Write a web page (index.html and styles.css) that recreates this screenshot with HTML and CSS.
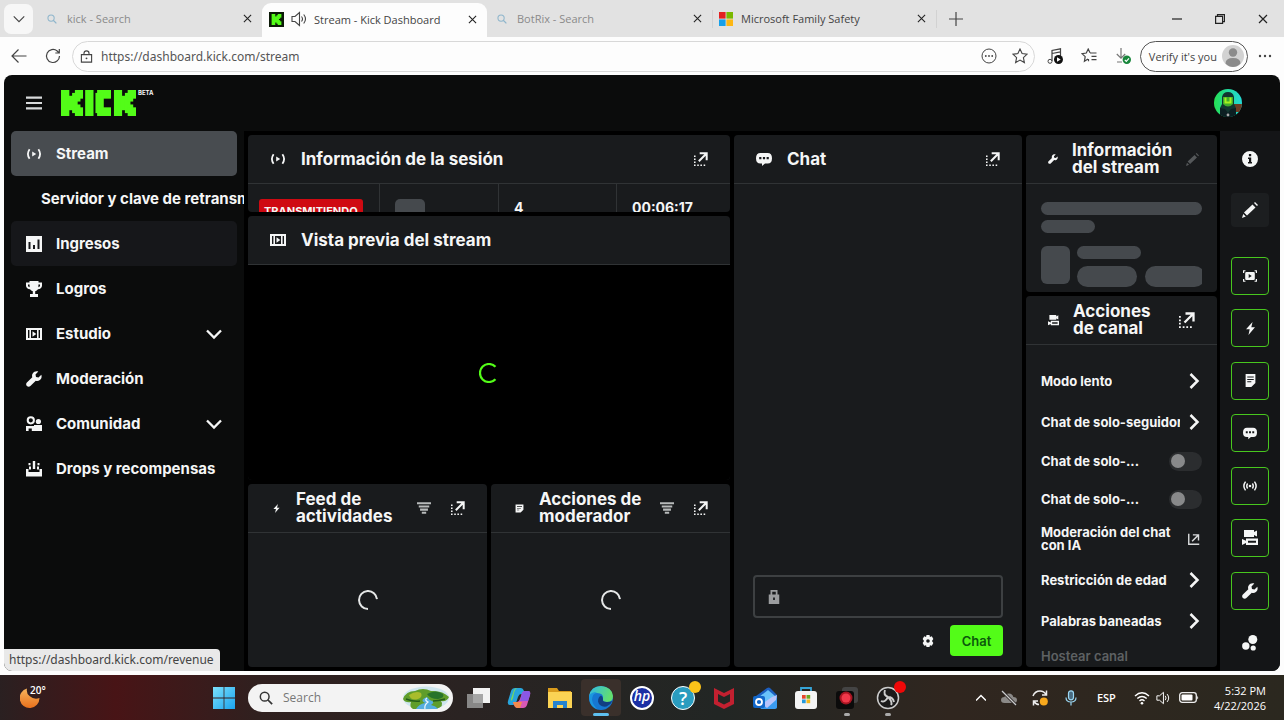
FILE: index.html
```html
<!DOCTYPE html>
<html lang="es">
<head>
<meta charset="utf-8">
<title>Stream - Kick Dashboard</title>
<link rel="stylesheet" href="styles.css">
</head>
<body>
<svg class="defs" aria-hidden="true">
  <symbol id="close" viewBox="0 0 10 10"><path d="M1 1l8 8M9 1L1 9" fill="none" stroke="currentColor" stroke-width="1.2"/></symbol>
  <symbol id="magnify" viewBox="0 0 16 16"><circle cx="6.5" cy="6.5" r="5" fill="none" stroke="currentColor" stroke-width="1.7"/><path d="M10 10l5 5" stroke="currentColor" stroke-width="2"/></symbol>
  <symbol id="k" viewBox="0 0 8 9"><rect width="3" height="9"/><rect x="2.500" y="2" width="2" height="5"/><rect x="4" y="1" width="2" height="7"/><rect x="5" width="3" height="3"/><rect x="5" y="2.500" width="2" height="1.500"/><rect x="5" y="5" width="2" height="1.500"/><rect x="5" y="6" width="3" height="3"/></symbol>
  <symbol id="live" viewBox="0 0 16 16"><path d="M3.6 3.2Q.2 8 3.6 12.8M12.4 3.2Q15.800 8 12.4 12.8" fill="none" stroke="currentColor" stroke-width="1.8"/><path d="M6.200 5.500v5l4-2.500z"/></symbol>
  <symbol id="bars" viewBox="0 0 16 16"><path fill-rule="evenodd" d="M0 0h16v16H0zM2.500 6v7h2V6zM7 9v4h2V9zM11.500 3.500V13h2V3.500z"/></symbol>
  <symbol id="trophy" viewBox="0 0 16 16"><path fill-rule="evenodd" d="M3.500 0h9v1.500H16V5q-.5 3-4 3.300Q11 9.800 9.200 10.200V13H12v3H4v-3h2.800v-2.800Q5 9.800 4 8.300.5 8 0 5V1.500h3.500zM2 3.500V5q.4 1 1.600 1.200V3.500zM14 3.500h-1.600v2.700Q13.600 6 14 5z"/></symbol>
  <symbol id="film" viewBox="0 0 16 16"><path fill-rule="evenodd" d="M0 2h16v12H0zM2 4v8h1.400V4zM5 4v8h6V4zM12.600 4v8H14V4z"/><path d="M6.500 5.200v5.600L10.300 8z"/></symbol>
  <symbol id="wrench" viewBox="0 0 16 16"><path d="M15.300 3.800l-2.800 2.700-2.500-.5-.5-2.500L12.300.6C10.200-.1 7.900.6 6.700 2.400c-.8 1.200-.8 2.600-.4 3.800L.9 11.500c-1 1-1 2.500 0 3.500s2.500 1 3.500 0l5.400-5.300c1.400.5 2.900.2 4.100-.7 1.600-1.300 2.100-3.300 1.400-5.200z"/></symbol>
  <symbol id="people" viewBox="0 0 16 16"><circle cx="4.800" cy="4.300" r="3.100" fill="none" stroke="currentColor" stroke-width="2"/><circle cx="12.400" cy="5.500" r="2.600"/><path d="M0 15v-5h8.500v5h-2.700v-2.500H2.600V15zM8 9h8v6H8z"/></symbol>
  <symbol id="drops" viewBox="0 0 16 16"><path d="M6.800 0h2.400v8H6.800zM2.500 2h2v2.200h-2zM11.500 2h2v2.200h-2zM3 5.500h2v3H3zM11 5.500h2v3h-2zM0 8h2.500v3h11V8H16v7.500H0z"/></symbol>
  <symbol id="down" viewBox="0 0 16 16"><path d="M1 4.500l7 7 7-7" fill="none" stroke="currentColor" stroke-width="2.300"/></symbol>
  <symbol id="chevron" viewBox="0 0 16 16"><path d="M1 4.500l7 7 7-7" fill="none" stroke="currentColor" stroke-width="1.500"/></symbol>
  <symbol id="right" viewBox="0 0 16 16"><path d="M4.500 1l7 7-7 7" fill="none" stroke="currentColor" stroke-width="2.500"/></symbol>
  <symbol id="popout" viewBox="0 0 16 16"><path d="M6.500 1.500h8v8M14 2l-8.500 8.500" fill="none" stroke="currentColor" stroke-width="2.300"/><path d="M0 4h1.800v1.800H0zM0 7.400h1.800v1.800H0zM0 10.800h1.800v1.800H0zM0 14.200h1.800V16H0zM3.700 14.200h1.800V16H3.700zM7.300 14.200h1.800V16H7.300zM11 14.200h1.800V16H11z"/></symbol>
  <symbol id="filter" viewBox="0 0 16 16"><path d="M0 1.500h16v2.300H0zM2 5h12v2.300H2zM3.500 8.700h9V11h-9zM5.500 12.200h5v2.300h-5z"/></symbol>
  <symbol id="bubble" viewBox="0 0 16 16"><path fill-rule="evenodd" d="M4.500 2h7Q16 2 16 7.300T11.500 12.500H9L6 15v-2.500H4.500Q0 12.500 0 7.300T4.500 2zM3.200 6v2.300h2.200V6zM6.900 6v2.300h2.200V6zM10.600 6v2.300h2.200V6z"/></symbol>
  <symbol id="bolt" viewBox="0 0 16 16"><path d="M10.500 0L2.500 9H7l-1.500 7L13.500 6.500H9z"/></symbol>
  <symbol id="note" viewBox="0 0 16 16"><path fill-rule="evenodd" d="M1 1h14v9l-5 5H1zM3.500 4v1.200h9V4zM3.500 7v1.200h7V7zM3.500 10v1.200h4V10z"/></symbol>
  <symbol id="page" viewBox="0 0 16 16"><path fill-rule="evenodd" d="M2 0h12v11l-5 5H2zM4 3v1.300h8V3zM4 6v1.300h8V6zM4 9v1.300h5V9z"/></symbol>
  <symbol id="pencil" viewBox="0 0 16 16"><path d="M10.500 2.500l3 3-8.500 8-3-3zM12 1l1-1 3 3-1 1zM1.200 12l2.600 2.600L0 16z"/></symbol>
  <symbol id="info" viewBox="0 0 16 16"><path fill-rule="evenodd" d="M8 0a8 8 0 100 16A8 8 0 008 0zM6.900 3v2.200h2.300V3zM6 6.500V8h1v3H6v1.600h4V11H9.200V6.500z"/></symbol>
  <symbol id="clip" viewBox="0 0 16 16"><path fill-rule="evenodd" d="M4 3.500h8q1.500 0 1.500 1.500v6q0 1.500-1.500 1.500H4q-1.500 0-1.500-1.500V5q0-1.500 1.500-1.500zM6.500 5.800v4.400L10 8z"/><path d="M.7 4.500V2h2.100M13.200 2h2.100v2.500M.7 11.500V14h2.100M13.200 14h2.100v-2.500" fill="none" stroke="currentColor" stroke-width="1.400"/></symbol>
  <symbol id="signal" viewBox="0 0 16 16"><path d="M2.900 3Q-.9 8 2.900 13M13.100 3Q16.900 8 13.100 13M5.300 5.200Q3.300 8 5.300 10.800M10.700 5.200Q12.700 8 10.700 10.800" fill="none" stroke="currentColor" stroke-width="1.700"/><circle cx="8" cy="8" r="1.500"/></symbol>
  <symbol id="cams" viewBox="0 0 16 16"><path fill-rule="evenodd" d="M2 0h10v2l3-1.500v6L12 5v2H2zM4 8.500h12V15H4v-2l-4 2V9l4 1.800zM6 10.700v2h8v-2z"/></symbol>
  <symbol id="dots3" viewBox="0 0 16 16"><circle cx="10.800" cy="4.500" r="4.500"/><circle cx="3.800" cy="11" r="3.700"/><circle cx="11.200" cy="13" r="2.600"/></symbol>
  <symbol id="lock" viewBox="0 0 16 16"><path fill-rule="evenodd" d="M4 0h8v5h2v11H2V5h2zM6 2v3h4V2zM7 8.500v3h2v-3z"/></symbol>
  <symbol id="gear" viewBox="0 0 16 16"><path fill-rule="evenodd" d="M6 0h4l.6 2.500 2.500-.8 2 3.500L13.300 8l1.800 2.800-2 3.500-2.500-.8L10 16H6l-.6-2.500-2.500.8-2-3.500L2.700 8 .9 5.200l2-3.500 2.500.8zM8 5.600a2.400 2.400 0 100 4.800 2.400 2.400 0 000-4.800z"/></symbol>
  <symbol id="external" viewBox="0 0 16 16"><path d="M1 1v14h14" fill="none" stroke="currentColor" stroke-width="1.900"/><path d="M6.500 2.500h7.500V10M14 2.500L5.500 11" fill="none" stroke="currentColor" stroke-width="1.900"/></symbol>
  <symbol id="ring" viewBox="0 0 20 20"><path d="M19 9.200A9 9 0 1010 19" fill="none" stroke="currentColor" stroke-width="2"/></symbol>
  <symbol id="ring-c" viewBox="0 0 20 20"><path d="M16.500 3.800A9 9 0 1016.500 16.200" fill="none" stroke="currentColor" stroke-width="2.200"/></symbol>
  <symbol id="speaker" viewBox="0 0 16 16"><path d="M1 5.500h3L8.500 1.500v13L4 10.500H1zM10.500 5.500q2 2.500 0 5M12.700 3.500q3.600 4.500 0 9" fill="none" stroke="currentColor" stroke-width="1.100"/></symbol>
  <symbol id="star" viewBox="0 0 16 16"><path d="M8 1l2.100 4.600 5 .6-3.700 3.400 1 5L8 12.100l-4.400 2.500 1-5L.9 6.200l5-.6z" fill="none" stroke="currentColor" stroke-width="1.100"/></symbol>
</svg>

<header class="tabstrip">
  <button class="tab-menu" aria-label="Tab actions"><svg class="i12"><use href="#chevron"/></svg></button>
  <div class="tab faded"><svg class="i10 blue"><use href="#magnify"/></svg><span class="tab-title">kick - Search</span><button class="tab-close" aria-label="Close"><svg class="i9"><use href="#close"/></svg></button></div>
  <div class="tab active"><span class="favicon"><svg class="fav-k"><use href="#k"/></svg></span><svg class="i16"><use href="#speaker"/></svg><span class="tab-title">Stream - Kick Dashboard</span><button class="tab-close" aria-label="Close"><svg class="i9"><use href="#close"/></svg></button></div>
  <div class="tab faded"><svg class="i10 blue"><use href="#magnify"/></svg><span class="tab-title">BotRix - Search</span><button class="tab-close" aria-label="Close"><svg class="i9"><use href="#close"/></svg></button></div>
  <div class="tab family"><svg class="i14" viewBox="0 0 14 14"><path fill="#e32020" d="M0 0h6.600v6.600H0z"/><path fill="#7ab800" d="M7.400 0H14v6.600H7.400z"/><path fill="#16a0ea" d="M0 7.400h6.600V14H0z"/><path fill="#fdb713" d="M7.400 7.400H14V14H7.400z"/></svg><span class="tab-title">Microsoft Family Safety</span><button class="tab-close" aria-label="Close"><svg class="i9"><use href="#close"/></svg></button></div>
  <button class="new-tab" aria-label="New tab"><svg class="i14" viewBox="0 0 14 14"><path d="M7 0v14M0 7h14" stroke="#444" stroke-width="1.200"/></svg></button>
  <div class="window-buttons">
    <button aria-label="Minimize"><svg class="i10" viewBox="0 0 10 10"><path d="M0 5h10" stroke="#222" stroke-width="1.200"/></svg></button>
    <button aria-label="Restore"><svg class="i10" viewBox="0 0 10 10"><path d="M.6 2.400h7v7h-7zM2.500 2V.6h7v7H8" fill="none" stroke="#222" stroke-width="1.200"/></svg></button>
    <button aria-label="Close window"><svg class="i10"><use href="#close"/></svg></button>
  </div>
</header>

<div class="toolbar">
  <button aria-label="Back"><svg class="i16" viewBox="0 0 16 16"><path d="M15.500 8H1M7.500 1.500L1 8l6.500 6.500" fill="none" stroke="currentColor" stroke-width="1.200"/></svg></button>
  <button aria-label="Refresh"><svg class="i16" viewBox="0 0 16 16"><path d="M14.500 8A6.500 6.500 0 1112.200 3l1.800 1.800M14.300 1v4h-4" fill="none" stroke="currentColor" stroke-width="1.200"/></svg></button>
  <div class="address">
    <svg class="i13" viewBox="0 0 13 14"><path d="M1 5h11v8H1zM3.800 5V3.500Q3.800 1 6.500 1t2.700 2.500V5" fill="none" stroke="currentColor" stroke-width="1.200"/><circle cx="6.500" cy="9" r="1"/></svg>
    <input type="text" aria-label="Address" value="https://dashboard.kick.com/stream">
    <button aria-label="More"><svg class="i16" viewBox="0 0 16 16"><circle cx="8" cy="8" r="7" fill="none" stroke="currentColor"/><circle cx="4.800" cy="8" r=".9"/><circle cx="8" cy="8" r=".9"/><circle cx="11.200" cy="8" r=".9"/></svg></button>
    <button aria-label="Favorite"><svg class="i16"><use href="#star"/></svg></button>
  </div>
  <div class="tools">
    <button aria-label="Media"><svg class="i16" viewBox="0 0 16 16"><path d="M5 13V2.500L13.500.8V8M5 5.500l8.500-1.700" fill="none" stroke="currentColor" stroke-width="1.200"/><circle cx="3" cy="13.300" r="2" fill="none" stroke="currentColor"/><circle cx="11.500" cy="11.500" r="4.500" fill="#111"/><path d="M10 9.200v4.600l3.700-2.300z" fill="#fff"/></svg></button>
    <button aria-label="Favorites"><svg class="i16" viewBox="0 0 16 16"><path d="M9 4.800L7.200 1 5.300 5 1 5.600l3.200 3-.8 4.600L7 11M7.500 11v2.300M9 5h6.500M10.500 8.300h5M10.500 11.600h5" fill="none" stroke="currentColor" stroke-width="1.200"/></svg></button>
    <button aria-label="Downloads"><svg class="i16" viewBox="0 0 16 16"><path d="M6 0v10M1.800 6L6 10.200 10.200 6M2 14h5" fill="none" stroke="#777" stroke-width="1.200"/><circle cx="11.800" cy="11.800" r="4.200" fill="#17863b"/><path d="M9.800 11.800l1.500 1.500 2.700-2.900" fill="none" stroke="#fff" stroke-width="1.200"/></svg></button>
  </div>
  <button class="verify">Verify it's you<svg class="i22" viewBox="0 0 22 22"><circle cx="11" cy="11" r="11" fill="#d2d2d2"/><circle cx="11" cy="7.500" r="4.200" fill="#8b8b8b"/><path d="M3.500 18.500q0-5.500 7.500-5.500t7.500 5.500Q15 22 11 22t-7.500-3.500z" fill="#8b8b8b"/></svg></button>
  <button class="more" aria-label="Settings"><svg class="i14" viewBox="0 0 14 14"><circle cx="2" cy="7" r="1.200"/><circle cx="7" cy="7" r="1.200"/><circle cx="12" cy="7" r="1.200"/></svg></button>
</div>

<div class="page">
  <header class="app-header">
    <button aria-label="Menú"><svg class="i16" viewBox="0 0 16 16"><path d="M0 1.500h16v2.200H0zM0 6.900h16v2.200H0zM0 12.300h16v2.200H0z"/></svg></button>
    <a class="logo" href="#" aria-label="Kick">
      <svg class="wordmark" viewBox="0 0 27 9" preserveAspectRatio="none"><use href="#k" width="8" height="9"/><rect x="8.700" width="3" height="9"/><rect x="13" width="5" height="3"/><rect x="12.400" y="1" width="3" height="7"/><rect x="13" y="6" width="5" height="3"/><use href="#k" x="19" width="8" height="9"/></svg>
      <span class="beta">BETA</span>
    </a>
    <button class="profile" aria-label="Perfil"><svg class="i28" viewBox="0 0 28 28"><defs><clipPath id="round"><circle cx="14" cy="14" r="14"/></clipPath><linearGradient id="av" x1="0" x2="1"><stop offset="0" stop-color="#26e052"/><stop offset=".5" stop-color="#20dca0"/><stop offset="1" stop-color="#25d9d6"/></linearGradient></defs><g clip-path="url(#round)"><path fill="url(#av)" d="M0 0h28v28H0z"/><path fill="#6b3b22" d="M20 15h8v8h-8z"/><path fill="#12352f" d="M6 28V19l2-4V8q1-5 6-5t6 5v7l2 4v9z"/><path fill="#0c1f22" d="M6 19l5 1 3 4 3-4 5-1v9H6z"/><path fill="#3fae2a" d="M9 8h10v7q-5 5-10 0z"/><path fill="#a6f021" d="M10.500 8.500h2v4h3v-4h2v6h-7z"/><circle cx="14" cy="26" r="1.400" fill="#aaa"/></g></svg></button>
  </header>

  <div class="app-body">
    <nav class="sidebar" aria-label="Panel">
      <a class="nav-item current" href="#"><svg class="i16"><use href="#live"/></svg><span>Stream</span></a>
      <a class="nav-item sub" href="#"><span>Servidor y clave de retransmisión</span></a>
      <a class="nav-item hover" href="#"><svg class="i16"><use href="#bars"/></svg><span>Ingresos</span></a>
      <a class="nav-item" href="#"><svg class="i16"><use href="#trophy"/></svg><span>Logros</span></a>
      <a class="nav-item" href="#"><svg class="i16"><use href="#film"/></svg><span>Estudio</span><svg class="i16 caret"><use href="#down"/></svg></a>
      <a class="nav-item" href="#"><svg class="i16"><use href="#wrench"/></svg><span>Moderación</span></a>
      <a class="nav-item" href="#"><svg class="i16"><use href="#people"/></svg><span>Comunidad</span><svg class="i16 caret"><use href="#down"/></svg></a>
      <a class="nav-item" href="#"><svg class="i16"><use href="#drops"/></svg><span>Drops y recompensas</span></a>
    </nav>

    <main class="board">
      <div class="column col-main">
        <section class="panel">
          <div class="panel-head"><svg class="i16"><use href="#live"/></svg><h2>Información de la sesión</h2><button aria-label="Abrir"><svg class="i14"><use href="#popout"/></svg></button></div>
          <div class="stats">
            <div class="status"><span class="badge">TRANSMITIENDO</span></div>
            <div><span class="skeleton viewers"></span></div>
            <div>4</div>
            <div>00:06:17</div>
          </div>
        </section>
        <section class="panel">
          <div class="panel-head"><svg class="i16"><use href="#film"/></svg><h2>Vista previa del stream</h2></div>
          <div class="loading video"><svg class="i20 green"><use href="#ring-c"/></svg></div>
        </section>
        <div class="feeds">
          <section class="panel">
            <div class="panel-head narrow"><svg class="i9"><use href="#bolt"/></svg><h2>Feed de actividades</h2><button class="filter" aria-label="Filtrar"><svg class="i14"><use href="#filter"/></svg></button><button aria-label="Abrir"><svg class="i14"><use href="#popout"/></svg></button></div>
            <div class="loading"><svg class="i20"><use href="#ring"/></svg></div>
          </section>
          <section class="panel">
            <div class="panel-head narrow"><svg class="i9"><use href="#note"/></svg><h2>Acciones de moderador</h2><button class="filter" aria-label="Filtrar"><svg class="i14"><use href="#filter"/></svg></button><button aria-label="Abrir"><svg class="i14"><use href="#popout"/></svg></button></div>
            <div class="loading"><svg class="i20"><use href="#ring"/></svg></div>
          </section>
        </div>
      </div>

      <section class="panel chat">
        <div class="panel-head"><svg class="i16"><use href="#bubble"/></svg><h2>Chat</h2><button aria-label="Abrir"><svg class="i14"><use href="#popout"/></svg></button></div>
        <div class="messages"></div>
        <form class="composer">
          <label class="message-box"><svg class="i14"><use href="#lock"/></svg><input type="text" aria-label="Mensaje"></label>
          <div class="composer-actions"><button type="button" aria-label="Ajustes"><svg class="i12"><use href="#gear"/></svg></button><button type="button" class="send">Chat</button></div>
        </form>
      </section>

      <div class="column col-side">
        <section class="panel">
          <div class="panel-head side"><svg class="i10"><use href="#wrench"/></svg><h2>Información del stream</h2><button class="dim" aria-label="Editar"><svg class="i13"><use href="#pencil"/></svg></button></div>
          <div class="placeholder">
            <span class="skeleton line"></span>
            <span class="skeleton line short"></span>
            <div class="media"><span class="skeleton thumb"></span><div class="media-text"><span class="skeleton line mid"></span><div class="pills"><span class="skeleton pill"></span><span class="skeleton pill"></span></div></div></div>
          </div>
        </section>
        <section class="panel">
          <div class="panel-head side"><svg class="i11"><use href="#cams"/></svg><h2>Acciones de canal</h2><button aria-label="Abrir"><svg class="i16"><use href="#popout"/></svg></button></div>
          <div class="actions">
            <button class="action"><span>Modo lento</span><svg class="i16"><use href="#right"/></svg></button>
            <button class="action"><span>Chat de solo-seguidores</span><svg class="i16"><use href="#right"/></svg></button>
            <label class="action toggle"><span>Chat de solo-...</span><input type="checkbox"></label>
            <label class="action toggle"><span>Chat de solo-...</span><input type="checkbox"></label>
            <a class="action wrap" href="#"><span>Moderación del chat con IA</span><svg class="i12"><use href="#external"/></svg></a>
            <button class="action"><span>Restricción de edad</span><svg class="i16"><use href="#right"/></svg></button>
            <button class="action"><span>Palabras baneadas</span><svg class="i16"><use href="#right"/></svg></button>
            <button class="action last" disabled><span>Hostear canal</span></button>
          </div>
        </section>
      </div>
    </main>

    <aside class="rail">
      <button aria-label="Info"><svg class="i16"><use href="#info"/></svg></button>
      <button class="edit" aria-label="Editar"><svg class="i16"><use href="#pencil"/></svg></button>
      <div class="rail-tools">
        <button class="on" aria-label="Vista previa"><svg class="i14"><use href="#clip"/></svg></button>
        <button class="on" aria-label="Actividades"><svg class="i13"><use href="#bolt"/></svg></button>
        <button class="on" aria-label="Moderador"><svg class="i13"><use href="#page"/></svg></button>
        <button class="on" aria-label="Chat"><svg class="i14"><use href="#bubble"/></svg></button>
        <button class="on" aria-label="Sesión"><svg class="i14"><use href="#signal"/></svg></button>
        <button class="on" aria-label="Canal"><svg class="i16"><use href="#cams"/></svg></button>
        <button class="on" aria-label="Stream"><svg class="i16"><use href="#wrench"/></svg></button>
        <button aria-label="Integraciones"><svg class="i16"><use href="#dots3"/></svg></button>
      </div>
    </aside>
  </div>
  <div class="link-status">https://dashboard.kick.com/revenue</div>
</div>

<footer class="taskbar">
  <button class="weather" aria-label="Tiempo"><svg class="i20" viewBox="0 0 20 20"><defs><linearGradient id="moon" x2="0" y2="1"><stop offset="0" stop-color="#f8b45c"/><stop offset="1" stop-color="#e8701c"/></linearGradient></defs><path d="M7 .5A9.900 9.900 0 1019.500 10Q14 12 9.500 8 6 5 7 .5z" fill="url(#moon)"/></svg><span>20°</span></button>
  <button class="start" aria-label="Inicio"><svg class="i22" viewBox="0 0 22 22"><defs><linearGradient id="win" x2="1" y2="1"><stop offset="0" stop-color="#7be0fb"/><stop offset="1" stop-color="#1ba3ee"/></linearGradient></defs><path fill="url(#win)" d="M0 0h10.600v10.600H0zM11.400 0H22v10.600H11.400zM0 11.400h10.600V22H0zM11.400 11.400H22V22H11.400z"/></svg></button>
  <label class="search"><svg class="i14"><use href="#magnify"/></svg><input type="text" placeholder="Search" aria-label="Search"><svg class="scene" viewBox="0 0 50 24"><ellipse cx="25" cy="12" rx="23" ry="11.500" fill="#cfe6ee"/><path d="M2 13q3-8 12-8 8-4 16 0 11-1 18 6-2 5-8 4 4 5-5 8H12q-4-2-2-7-6 1-8-3z" fill="#5f9d2b"/><path d="M8 9q7-5 12-2 2 4-3 6-7 2-9-4z" fill="#a9bd2c"/><path d="M26 8q9-5 16 0 2 4-5 5-8 0-11-5z" fill="#28742b"/><path d="M15 23q3-5 9-6-6-3 2-6 2 3 5 4t-1 4q5 1 7 4z" fill="#55aee0"/><path d="M24 23q-1-4 3-7-4-2-1-4" fill="none" stroke="#e9f7ff" stroke-width="1.200"/><path d="M5 13q8 3 14 2M32 15q5 0 12-2" stroke="#245d1c" stroke-width="1.500" fill="none"/></svg></label>
  <div class="apps">
    <button aria-label="Task view"><svg class="i24" viewBox="0 0 24 24"><path fill="#f2f2f2" d="M7 2h17v15H7z"/><path fill="#999" fill-opacity=".85" d="M1 8h16v14H1z"/></svg></button>
    <button aria-label="Copilot"><svg class="i24" viewBox="0 0 24 24"><path d="M8 2h6q2 0 3 3l1 3h-4q-2 0-3 3l-2 6q-1 2-3 2H3Q0 19 1 15L4 5q1-3 4-3z" fill="#27a4dc"/><path d="M4 13l3-9q1-2 3-2-2 1-3 5L6 12q-1 3-2 3z" fill="#7ad95a"/><path d="M16 22h-6q-2 0-3-3l-1-3h4q2 0 3-3l2-6q1-2 3-2h3q3 0 2 4l-3 10q-1 3-4 3z" fill="#d858b4"/><path d="M18 5h3q3 0 2 4l-2 6h-8l2-8q1-2 3-2z" fill="#8a58e6"/><path d="M6 16h9l-2 6h-3q-2 0-3-3z" fill="#f48a4c"/></svg></button>
    <button aria-label="Explorer"><svg class="i24" viewBox="0 0 24 24"><path fill="#d99b1c" d="M0 2h9l2 3h12v6H0z"/><path fill="#fbd354" d="M0 6h24v16H0z"/><path fill="#2583cf" d="M5 15h14v7h-4v-3H9v3H5z"/></svg></button>
    <button class="running focused" aria-label="Edge"><svg class="i24" viewBox="0 0 24 24"><defs><linearGradient id="edge" x2="1" y2=".3"><stop offset="0" stop-color="#2fb8e8"/><stop offset="1" stop-color="#63df6e"/></linearGradient></defs><circle cx="12" cy="12" r="12" fill="#1677d2"/><path d="M0 10Q2 0 12 0q11 1 12 10 0 6-6 6-5 0-4-3 1-6-6-6-5 0-8 3z" fill="url(#edge)"/><path d="M14 13q-1 3 4 3 3 0 5.500-1-2 4-6 5.500-7 1-8.500-5Q9 11 12 9.500q2 1 2 3.500z" fill="#123f83"/><path d="M0 10q2-4 8-4-5 2-5 8 1 6 6 9.600Q0 21 0 10z" fill="#1c98df"/></svg></button>
    <button aria-label="HP"><span class="hp">hp</span></button>
    <button aria-label="Ayuda"><span class="help">?</span><span class="dot yellow"></span></button>
    <button aria-label="McAfee"><svg class="i24" viewBox="0 0 24 24"><path d="M2 2l10 5 10-5v16l-10 5-10-5zM6 8v7.500l6 3 6-3V8l-6 3z" fill="#c22030" fill-rule="evenodd"/></svg></button>
    <button aria-label="Outlook"><svg class="i24" viewBox="0 0 24 24"><path d="M3 10L14 2q2-1 3 0l7 7v13H3z" fill="#1c5fc0"/><path d="M6 11l9-7 7 6-9 7z" fill="#69c3fa"/><path d="M24 10v11q0 2-2 2H7l12-8z" fill="#3a9bf0"/><path d="M9 18l10-7 5-2-1 5-9 8z" fill="#b8c4fb"/><rect y="10" width="12" height="12" rx="2" fill="#1267c9"/><circle cx="6" cy="16" r="3" fill="none" stroke="#fff" stroke-width="1.800"/></svg></button>
    <button aria-label="Store"><svg class="i24" viewBox="0 0 24 24"><path d="M7 6V2h10v4" fill="none" stroke="#36a5d8" stroke-width="1.800"/><rect x="1" y="5" width="22" height="18" rx="3" fill="#f4f4f4"/><path fill="#e5462d" d="M8 9h3.700v3.700H8z"/><path fill="#6aa91e" d="M12.500 9h3.700v3.700h-3.700z"/><path fill="#2699dc" d="M8 13.500h3.700v3.700H8z"/><path fill="#f3b71b" d="M12.500 13.500h3.700v3.700h-3.700z"/></svg></button>
    <button class="running" aria-label="Recorder"><svg class="i24" viewBox="0 0 24 24"><rect x="7" y="1" width="16" height="16" rx="3" fill="#444"/><rect x="1" y="5" width="18" height="18" rx="3" fill="#0b0b0b"/><circle cx="11" cy="12" r="6.500" fill="#a81522"/><circle cx="11" cy="12" r="4.500" fill="#f0384a"/></svg></button>
    <button class="running" aria-label="OBS"><svg class="i24" viewBox="0 0 24 24"><circle cx="12" cy="12" r="10.500" fill="#1b1a1a" stroke="#ccc" stroke-width="1.500"/><path d="M9 4q-2 5 3 7 5 0 6 5M5 15q4 2 7-4M15 19q2-3-3-8" fill="none" stroke="#ccc" stroke-width="1.900"/></svg><span class="dot red"></span></button>
  </div>
  <div class="tray">
    <button aria-label="Iconos ocultos"><svg class="i10" viewBox="0 0 10 10"><path d="M0 7.500l5-5 5 5" fill="none" stroke="#fff" stroke-width="1.500"/></svg></button>
    <svg class="i16" viewBox="0 0 16 16"><path d="M3.500 13Q0 13 0 10t3.500-3Q4.500 3.500 8 3.500T12.300 7Q16 7 16 10t-3.500 3z" fill="#8b8987"/><path d="M1 1l14 14" stroke="#2a2524" stroke-width="3"/><path d="M1 1l14 14" stroke="#ccc" stroke-width="1.200"/></svg>
    <svg class="i16" viewBox="0 0 16 16"><path d="M1 6q2-5 7-5 4 0 6 3.500M14.500.5v4.500h-4.500M7 14.500q-3 0-5-3M1.500 15.500v-4.500H6" fill="none" stroke="#eee" stroke-width="1.500"/><circle cx="11.800" cy="11.500" r="4" fill="#f9a91d"/></svg>
    <svg class="i16" viewBox="0 0 16 16"><rect x="5.500" y=".8" width="5" height="9" rx="2.500" fill="#496b80" stroke="#9bd7f3" stroke-width="1.200"/><path d="M3 7.500q0 4.500 5 4.500t5-4.500M8 12v3.500" fill="none" stroke="#9bd7f3" stroke-width="1.200"/></svg>
    <span class="lang">ESP</span>
    <div class="system">
      <svg class="i16" viewBox="0 0 16 16"><path d="M1 6q7-6.500 14 0M3.300 8.600q4.700-4.400 9.400 0M5.500 11q2.500-2.300 5 0" fill="none" stroke="#fff" stroke-width="1.400"/><circle cx="8" cy="13.200" r="1.300" fill="#fff"/></svg>
      <svg class="i14"><use href="#speaker"/></svg>
      <svg class="battery" viewBox="0 0 20 11"><rect x=".7" y=".7" width="16.600" height="9.600" rx="2.500" fill="none" stroke="#eee" stroke-width="1.300"/><rect x="2.500" y="2.500" width="11" height="6" rx="1" fill="#fff"/><path d="M18.200 3.500q1.800 2 0 4z" fill="#eee"/></svg>
    </div>
    <div class="clock"><div>5:32 PM</div><div>4/22/2026</div></div>
  </div>
</footer>
</body>
</html>
```
FILE: styles.css
```css
* { box-sizing: border-box; }

body {
  margin: 0;
  height: 100vh;
  display: flex;
  flex-direction: column;
  overflow: hidden;
  background: #fdfdfd;
  font-family: "Open Sans", "Noto Sans", sans-serif;
  color: #444;
}

button, input { font: inherit; color: inherit; }
button {
  display: flex;
  align-items: center;
  justify-content: center;
  padding: 0;
  border: 0;
  background: none;
}
input { min-width: 0; padding: 0; border: 0; outline: 0; background: none; }
a { color: inherit; text-decoration: none; }
svg { fill: currentColor; flex: none; display: block; }
h2 { margin: 0; }

.defs { position: absolute; width: 0; height: 0; }
.i9 { width: 9px; height: 9px; }
.i10 { width: 10px; height: 10px; }
.i11 { width: 11px; height: 11px; }
.i12 { width: 12px; height: 12px; }
.i13 { width: 13px; height: 13px; }
.i14 { width: 14px; height: 14px; }
.i16 { width: 16px; height: 16px; }
.i20 { width: 20px; height: 20px; }
.i22 { width: 22px; height: 22px; }
.i24 { width: 24px; height: 24px; }
.i28 { width: 28px; height: 28px; }

/* Browser tabs */
.tabstrip {
  flex: none;
  display: flex;
  align-items: center;
  height: 37px;
  padding-left: 4px;
  background: #e2e2e2;
  font-size: 11px;
}
.tab-menu { width: 29px; height: 30px; margin-right: 4px; border-radius: 7px; background: #f7f7f7; }
.tab {
  flex: 0 1 225px;
  display: flex;
  align-items: center;
  gap: 8px;
  height: 37px;
  padding: 0 10px;
}
.tab-title { flex: 1; white-space: nowrap; overflow: hidden; }
.faded .tab-title { color: #8a8a8a; }
.faded { gap: 10px; }
.blue { color: #8fb6cc; }
.tab-close { color: #222; }
.active {
  gap: 7px;
  height: 34px;
  padding-left: 7px;
  align-self: flex-end;
  padding-bottom: 2px;
  border-radius: 9px 9px 0 0;
  background: #fdfdfd;
}
.favicon { padding: 2px; background: #0c1a08; color: #53fc18; }
.fav-k { width: 11px; height: 11px; }
.family { padding-left: 6px; border-right: 1px solid #d2d2d2; height: 18px; border-left: 1px solid #d2d2d2; }
.new-tab { width: 38px; height: 30px; }
.window-buttons { margin-left: auto; display: flex; }
.window-buttons button { width: 43px; height: 37px; color: #222; }

/* Browser toolbar */
.toolbar {
  flex: none;
  display: flex;
  align-items: center;
  height: 38px;
  padding: 0 5px 0 11px;
  gap: 18px;
}
.address {
  flex: 1;
  display: flex;
  align-items: center;
  gap: 8px;
  height: 31px;
  margin-left: -7px;
  padding: 0 6px 0 7px;
  border: 1px solid #d8d8d8;
  border-radius: 16px;
  font-family: "Noto Sans", sans-serif;
  font-size: 12px;
}
.address input { flex: 1; color: #555; }
.address button + button { margin-left: 7px; }
.tools { display: flex; gap: 18px; margin-left: -6px; }
.verify {
  gap: 5px;
  height: 31px;
  margin-left: -9px;
  padding: 0 3px 0 8px;
  border: 1px solid #555;
  border-radius: 16px;
  font-size: 11px;
}
.more { width: 28px; height: 28px; margin-left: -15px; }

/* Dashboard shell */
.page {
  position: relative;
  flex: 1;
  min-height: 0;
  display: flex;
  flex-direction: column;
  margin: 0 4px 4px;
  border-radius: 8px;
  overflow: hidden;
  background: #0b0c0c;
  color: #f5f6f6;
  font-family: Inter, "Liberation Sans", sans-serif;
  font-weight: 700;
}
.app-header {
  flex: none;
  display: flex;
  align-items: center;
  height: 56px;
  padding: 0 38px 0 22px;
}
.app-header button { color: #d8dadb; }
.logo { display: flex; align-items: flex-start; margin-left: 19px; color: #53fc18; }
.wordmark { width: 75px; height: 26px; }
.beta { margin-left: 2px; color: #f5f6f6; font-size: 6px; line-height: 6px; }
.app-header .profile { margin-left: auto; }
.app-body { flex: 1; min-height: 0; display: flex; }

.sidebar { flex: none; width: 240px; padding: 0 7px; overflow: hidden; font-size: 15px; }
.nav-item {
  display: flex;
  align-items: center;
  gap: 14px;
  height: 45px;
  padding: 0 15px;
  border-radius: 5px;
  white-space: nowrap;
}
.current { background: #484c50; }
.hover { background: #16171a; }
.sub { padding-left: 30px; padding-right: 0; margin-right: -7px; overflow: hidden; border-radius: 0; }
.caret { margin-left: auto; }

.board {
  flex: 1;
  min-width: 0;
  display: grid;
  grid-template-columns: 482fr 288fr 191fr;
  gap: 4px;
  padding: 4px 3px 4px 4px;
  background: #000;
}
.column, .feeds { display: grid; gap: 4px; min-width: 0; min-height: 0; }
.col-main { grid-template-rows: 77fr 264fr 183fr; }
.col-side { grid-template-rows: 157fr 371fr; }
.feeds { grid-template-columns: 1fr 1fr; }
.panel {
  display: flex;
  flex-direction: column;
  min-width: 0;
  min-height: 0;
  overflow: hidden;
  border-radius: 4px;
  background: #191b1d;
}
.panel-head {
  flex: none;
  display: flex;
  align-items: center;
  gap: 15px;
  height: 49px;
  padding: 0 22px;
  border-bottom: 1px solid #303335;
}
.panel-head h2 { flex: 1; font-size: 17px; line-height: 17px; }
.narrow { gap: 15px; padding-left: 24px; }
.narrow .filter { margin-right: 5px; color: #b7baba; }
.side { gap: 14px; }
.dim { color: #55585a; }

.stats { display: grid; grid-template-columns: 131fr 119fr 118fr 114fr; height: 48px; flex: none; font-size: 14px; line-height: 18px; }
.stats div { min-width: 0; padding: 15px 15px 0; border-left: 1px solid #303335; }
.stats .status { padding: 15px 11px 0; border-left: 0; }
.badge { display: inline-block; padding: 3px 5px 2px; border-radius: 3px; background: #cf0a12; font-size: 11px; line-height: 18px; }
.skeleton { display: block; background: #45494d; }
.viewers { width: 30px; height: 24px; border-radius: 5px; }

.loading { flex: 1; display: grid; place-items: center; color: #e4e6e6; }
.video { background: #000; }
.green { color: #53fc18; }

.messages { flex: 1; }
.composer { padding: 0 19px 11px; }
.message-box {
  display: flex;
  align-items: center;
  height: 43px;
  padding: 0 12px;
  border: 2px solid #3d4042;
  border-radius: 4px;
  color: #9b9d9f;
}
.message-box input { flex: 1; }
.composer-actions { display: flex; justify-content: flex-end; gap: 16px; margin-top: 7px; }
.send { width: 53px; height: 31px; border-radius: 4px; background: #53fc18; color: #0b5a0b; font-size: 13px; font-weight: 600; }

.placeholder { display: flex; flex-direction: column; gap: 5px; padding: 18px 15px; }
.line { height: 13px; border-radius: 7px; }
.short { width: 54px; }
.mid { width: 64px; }
.media { display: flex; gap: 7px; margin-top: 8px; overflow: hidden; }
.thumb { flex: none; width: 29px; height: 38px; border-radius: 6px; }
.media-text { display: flex; flex-direction: column; gap: 7px; }
.pills { display: flex; gap: 8px; }
.pill { flex: none; width: 60px; height: 21px; border-radius: 11px; }

.actions { padding: 15px 15px 0; overflow: hidden; font-size: 13px; }
.action { display: flex; align-items: center; justify-content: space-between; gap: 6px; width: 100%; height: 41px; text-align: left; }
.action span { white-space: nowrap; overflow: hidden; }
.action.wrap span { white-space: normal; line-height: 13px; }
.action.wrap svg { margin-right: 2px; color: #d8dadb; }
.action.toggle { height: 38px; }
.action.last { height: 30px; color: #5e6163; font-weight: 600; }
.toggle input {
  appearance: none;
  flex: none;
  display: flex;
  align-items: center;
  width: 33px;
  height: 19px;
  margin: 0;
  padding: 2px;
  border-radius: 10px;
  background: #2b2d2f;
}
.toggle input::before { content: ""; width: 14px; height: 14px; border-radius: 50%; background: #88898a; }

.rail {
  flex: none;
  display: flex;
  flex-direction: column;
  align-items: center;
  width: 60px;
  padding: 9px 0;
  background: #141517;
}
.rail button { flex: none; width: 38px; height: 38px; border: 1px solid transparent; border-radius: 4px; }
.rail .edit { height: 34px; margin-top: 15px; background: #1c1e20; }
.rail-tools { flex: 1; min-height: 0; display: flex; flex-direction: column; justify-content: space-between; margin-top: 30px; }
.rail .on { border-color: #48c71e; background: #17191a; }

.link-status {
  position: absolute;
  left: 0;
  bottom: 0;
  padding: 2px 6px 2px 5px;
  border-radius: 0 4px 0 0;
  background: #e9e9e9;
  color: #444;
  font: 400 12px/18px "Noto Sans", sans-serif;
}

/* Desktop taskbar */
.taskbar {
  flex: none;
  display: flex;
  align-items: center;
  height: 45px;
  padding: 0 18px 0 20px;
  background: linear-gradient(90deg, #2a2021 0, #481416 9%, #30201f 20%, #2a2322 36%, #222624 56%, #30261f 74%, #2b281f 100%);
  color: #fff;
}
.weather { position: relative; width: 30px; height: 30px; justify-content: flex-start; }
.weather span { position: absolute; left: 10px; top: 0; font-size: 10px; line-height: 14px; font-weight: 600; }
.start { margin-left: 163px; }
.search {
  display: flex;
  align-items: center;
  gap: 10px;
  width: 205px;
  height: 28px;
  margin-left: 13px;
  padding: 0 2px 0 11px;
  border-radius: 14px;
  background: #f3f3f3;
  color: #333;
  font-size: 12px;
}
.search input { flex: 1; }
.search input::placeholder { color: #777; opacity: 1; }
.scene { width: 50px; height: 24px; }
.apps { display: flex; gap: 1px; margin-left: 5px; }
.apps button { position: relative; width: 40px; height: 37px; border-radius: 4px; }
.apps .focused { background: #3a302b; }
.running::after { content: ""; position: absolute; bottom: 0; left: 17px; width: 6px; height: 3px; border-radius: 2px; background: #aaa; }
.focused::after { left: 12px; width: 16px; background: #5fc0f0; }
.hp, .help {
  width: 24px;
  height: 24px;
  border: 2px solid #fff;
  border-radius: 50%;
  background: #1b2fa4;
  font-size: 14px;
  line-height: 16px;
  font-style: italic;
  font-weight: 600;
  text-align: center;
}
.help { border-width: 1px; background: #2a9cbf; font-size: 18px; line-height: 22px; font-style: normal; }
.dot { position: absolute; top: 2px; right: 2px; width: 12px; height: 12px; border-radius: 50%; }
.yellow { background: #fcc419; }
.red { background: #f00808; }
.tray { display: flex; align-items: center; gap: 15px; margin-left: auto; }
.lang { font-size: 11px; font-weight: 600; margin: 0 3px; }
.system { display: flex; align-items: center; gap: 6px; }
.battery { width: 20px; height: 11px; margin-left: 3px; }
.clock { font-size: 11px; line-height: 15px; text-align: right; }
```
